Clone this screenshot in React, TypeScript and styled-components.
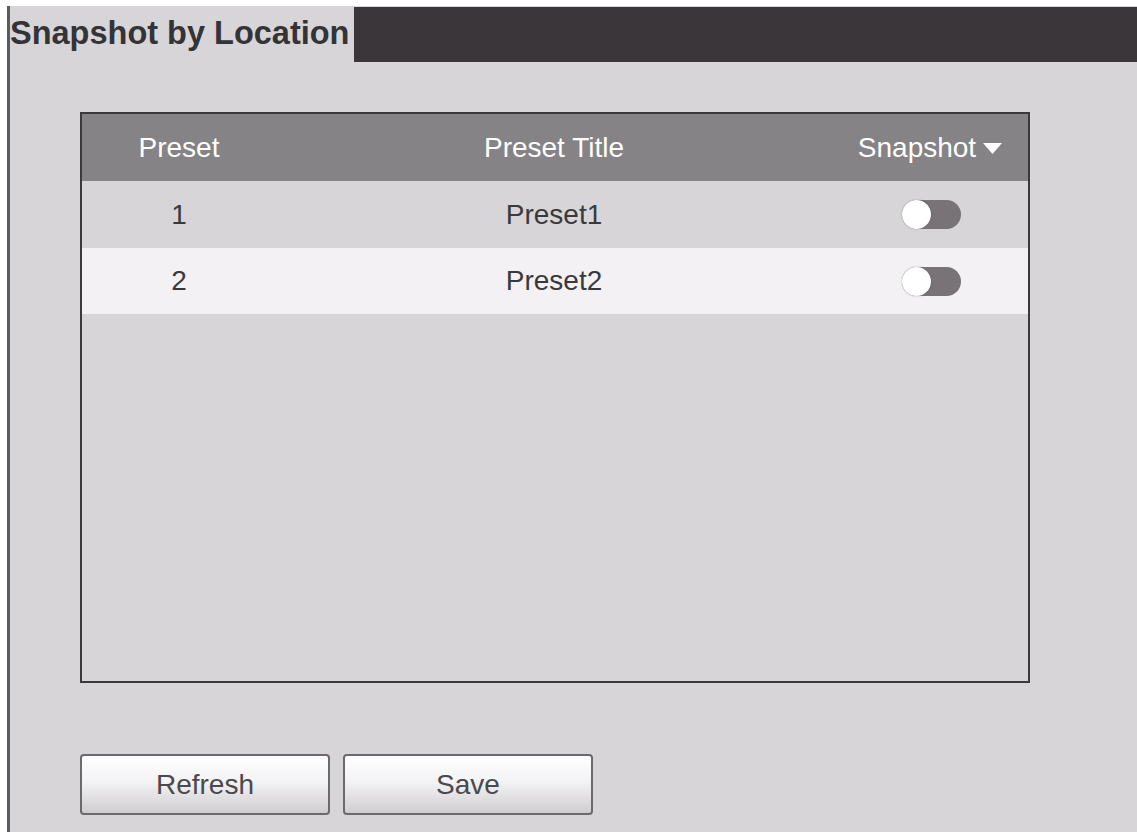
import * as React from 'react';
import styled, { createGlobalStyle } from 'styled-components';

const GlobalStyle = createGlobalStyle`
  html, body {
    margin: 0;
    padding: 0;
    background: #ffffff;
  }
  * {
    box-sizing: border-box;
  }
`;

const StyledPage = styled.div`
  margin: 6px 0 0 7px;
  height: 826px;
  border-left: 3px solid #5b5a5c;
  background: #d8d5d9;
  display: flex;
  flex-direction: column;
  font-family: 'Liberation Sans', Arial, sans-serif;
`;

const StyledHeader = styled.div`
  display: flex;
  align-items: stretch;
  height: 56px;
`;

const StyledTitle = styled.h1`
  margin: 0;
  width: 344px;
  padding-top: 9px;
  font-size: 32.5px;
  line-height: 36px;
  font-weight: bold;
  color: #343336;
  white-space: nowrap;
`;

const StyledDarkBar = styled.div`
  flex: 1;
  margin-top: 1px;
  background: #3a3639;
`;

const StyledContent = styled.div`
  padding: 50px 0 0 70px;
  display: flex;
  flex-direction: column;
`;

const StyledTable = styled.div`
  width: 950px;
  height: 571px;
  border: 2px solid #3a393b;
  display: flex;
  flex-direction: column;
  background: #d8d5d9;
`;

const StyledRow = styled.div<{ $bg: string; $color: string; $height: number }>`
  display: grid;
  grid-template-columns: 194px 1fr 196px;
  align-items: center;
  height: ${(p) => p.$height}px;
  background: ${(p) => p.$bg};
  color: ${(p) => p.$color};
  font-size: 28px;
`;

const StyledCell = styled.div`
  display: flex;
  align-items: center;
  justify-content: center;
  gap: 7px;
`;

const StyledArrow = styled.svg`
  width: 19px;
  height: 12px;
  fill: #ffffff;
  margin-top: 3px;
`;

const StyledToggle = styled.div`
  width: 59px;
  height: 29px;
  border-radius: 15px;
  background: #777377;
  position: relative;
  margin-left: 2px;

  &::before {
    content: '';
    position: absolute;
    left: 0;
    top: 0;
    width: 29px;
    height: 29px;
    border-radius: 50%;
    background: #ffffff;
    box-shadow: 0 0 2px rgba(0, 0, 0, 0.25);
  }
`;

const StyledButtons = styled.div`
  display: flex;
  gap: 13px;
  margin-top: 71px;
`;

const StyledButton = styled.button`
  width: 250px;
  height: 61px;
  border: 2px solid #6a696b;
  border-radius: 4px;
  background: linear-gradient(to bottom, #ffffff 0%, #f3f2f4 45%, #cfcdd0 100%);
  font-family: 'Liberation Sans', Arial, sans-serif;
  font-size: 28px;
  color: #4a494b;
  padding: 0;
`;

const presets = [
  { id: 1, title: 'Preset1', bg: '#d8d5d9', height: 67 },
  { id: 2, title: 'Preset2', bg: '#f3f1f4', height: 66 },
];

export default function App(): JSX.Element {
  return (
    <>
      <GlobalStyle />
      <StyledPage>
        <StyledHeader>
          <StyledTitle>Snapshot by Location</StyledTitle>
          <StyledDarkBar />
        </StyledHeader>
        <StyledContent>
          <StyledTable>
            <StyledRow $bg="#858385" $color="#ffffff" $height={67}>
              <StyledCell>Preset</StyledCell>
              <StyledCell>Preset Title</StyledCell>
              <StyledCell>
                Snapshot
                <StyledArrow viewBox="0 0 19 12">
                  <path d="M0 0 L19 0 L9.5 11 Z" />
                </StyledArrow>
              </StyledCell>
            </StyledRow>
            {presets.map((p) => (
              <StyledRow key={p.id} $bg={p.bg} $color="#3a393b" $height={p.height}>
                <StyledCell>{p.id}</StyledCell>
                <StyledCell>{p.title}</StyledCell>
                <StyledCell>
                  <StyledToggle />
                </StyledCell>
              </StyledRow>
            ))}
          </StyledTable>
          <StyledButtons>
            <StyledButton>Refresh</StyledButton>
            <StyledButton>Save</StyledButton>
          </StyledButtons>
        </StyledContent>
      </StyledPage>
    </>
  );
}
